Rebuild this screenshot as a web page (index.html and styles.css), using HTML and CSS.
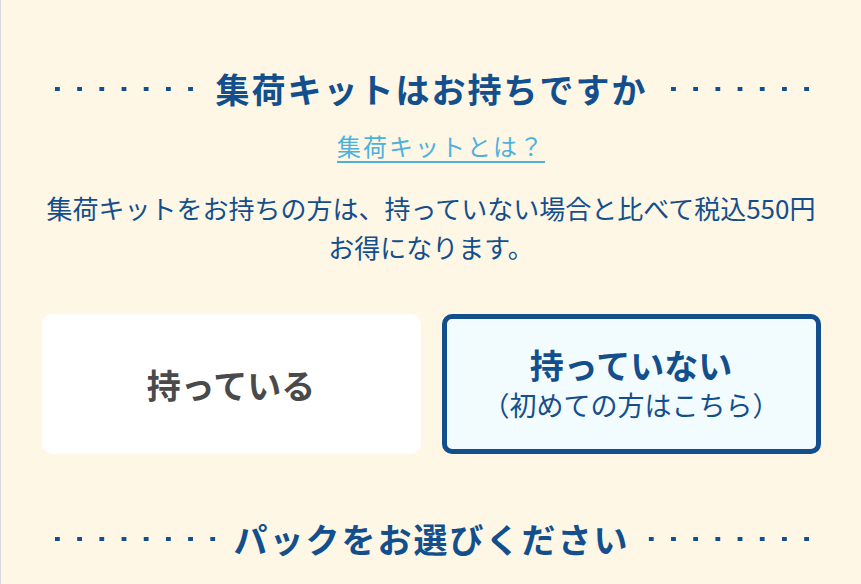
FILE: index.html
```html
<!DOCTYPE html>
<html lang="ja">
<head>
<meta charset="utf-8">
<title>集荷キット</title>
<link rel="stylesheet" href="styles.css">
</head>
<body>
<div class="page">
  <div class="container">
    <h2 class="section-title">
      <span class="dots dots-left"></span>
      <span class="title-text">集荷キットはお持ちですか</span>
      <span class="dots dots-right"></span>
    </h2>
    <p class="kit-link"><a href="#" class="link">集荷キットとは？</a></p>
    <p class="lead">集荷キットをお持ちの方は、持っていない場合と比べて税込550円お得になります。</p>
    <div class="choices">
      <button class="choice choice-have" type="button">
        <span class="choice-main">持っている</span>
      </button>
      <button class="choice choice-none" type="button">
        <span class="choice-main">持っていない</span>
        <span class="choice-sub">（初めての方はこちら）</span>
      </button>
    </div>
    <h2 class="section-title section-title-2">
      <span class="dots dots-left"></span>
      <span class="title-text">パックをお選びください</span>
      <span class="dots dots-right"></span>
    </h2>
  </div>
</div>
</body>
</html>
```
FILE: styles.css
```css
html, body {
  margin: 0;
  padding: 0;
  background: #fef7e6;
}

body {
  font-family: "Noto Sans CJK JP", "Noto Sans", sans-serif;
  color: #134f8c;
}

.page {
  min-height: 584px;
  border-left: 1px solid #d6dae0;
  overflow: hidden;
}

.container {
  width: 779px;
  margin: 0 auto;
  padding-top: 63px;
}

.section-title {
  display: flex;
  align-items: center;
  gap: 16px;
  margin: 0;
  padding: 0 12px 0 13px;
  font-size: 34px;
  font-weight: 700;
  line-height: 51px;
  letter-spacing: 2px;
  color: #134f8c;
}

.title-text {
  flex: none;
  white-space: nowrap;
}

.dots {
  flex: 1;
  height: 4px;
  background-repeat: repeat-x;
  background-size: 22.2px 4px;
}

.dots-left {
  background-image: linear-gradient(90deg, #134f8c 5px, transparent 5px);
  background-position: left center;
}

.dots-right {
  background-image: linear-gradient(270deg, #134f8c 5px, transparent 5px);
  background-position: right center;
}

.kit-link {
  margin: 15px 0 0;
  padding-left: 20px;
  text-align: center;
  font-size: 24px;
  line-height: 33px;
  letter-spacing: 2px;
}

.link {
  color: #4cb2dc;
  text-decoration: underline;
  text-underline-offset: 5px;
  text-decoration-thickness: 2px;
}

.lead {
  margin: 26px 0 0;
  text-align: center;
  font-size: 26px;
  line-height: 39px;
  color: #134f8c;
}

.choices {
  display: grid;
  grid-template-columns: 1fr 1fr;
  gap: 21px;
  margin-top: 48px;
}

.choice {
  height: 140px;
  box-sizing: border-box;
  border-radius: 10px;
  border: none;
  padding: 0;
  font-family: inherit;
  display: flex;
  flex-direction: column;
  align-items: center;
  justify-content: center;
  cursor: pointer;
}

.choice-have {
  background: #ffffff;
  color: #4a4a4a;
}

.choice-none {
  background: #f2fbfe;
  border: 5px solid #134f8c;
  color: #134f8c;
}

.choice-main {
  font-size: 34px;
  font-weight: 700;
  line-height: 40px;
  padding-top: 2px;
}

.choice-sub {
  font-size: 27px;
  line-height: 40px;
}

.section-title-2 {
  margin-top: 59px;
}
```
